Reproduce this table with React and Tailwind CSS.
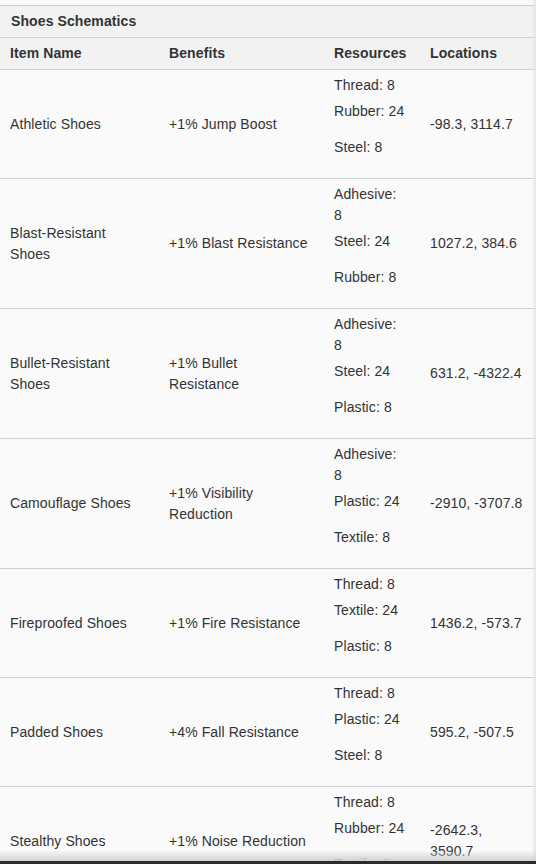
import React from 'react';

const rows = [
    {name: 'Athletic Shoes', benefit: '+1% Jump Boost', res: ['Thread: 8', 'Rubber: 24', 'Steel: 8'], loc: '-98.3, 3114.7'},
    {name: 'Blast-Resistant Shoes', benefit: '+1% Blast Resistance', res: ['Adhesive: 8', 'Steel: 24', 'Rubber: 8'], loc: '1027.2, 384.6'},
    {name: 'Bullet-Resistant Shoes', benefit: '+1% Bullet Resistance', res: ['Adhesive: 8', 'Steel: 24', 'Plastic: 8'], loc: '631.2, -4322.4'},
    {name: 'Camouflage Shoes', benefit: '+1% Visibility Reduction', res: ['Adhesive: 8', 'Plastic: 24', 'Textile: 8'], loc: '-2910, -3707.8'},
    {name: 'Fireproofed Shoes', benefit: '+1% Fire Resistance', res: ['Thread: 8', 'Textile: 24', 'Plastic: 8'], loc: '1436.2, -573.7'},
    {name: 'Padded Shoes', benefit: '+4% Fall Resistance', res: ['Thread: 8', 'Plastic: 24', 'Steel: 8'], loc: '595.2, -507.5'},
    {name: 'Stealthy Shoes', benefit: '+1% Noise Reduction', res: ['Thread: 8', 'Rubber: 24', 'Textile: 8'], loc: '-2642.3, 3590.7'},
];

const App = () => {
    return (
        <div className="min-h-screen bg-[#fafafa] pt-[5px] text-[14px] tracking-[0.1px] text-[#333] font-['Liberation_Sans',Arial,sans-serif]">
            <div className="border-t border-[#cfcfcf]">
                <div className="h-[31px] bg-[#f2f2f2] pl-[11px] font-bold leading-[31px] text-[#333]">
                    Shoes Schematics
                </div>
                <table className="w-full table-fixed border-collapse">
                    <colgroup>
                        <col className="w-[159px]"/>
                        <col className="w-[165px]"/>
                        <col className="w-[96px]"/>
                        <col/>
                    </colgroup>
                    <thead>
                    <tr className="h-[32px] border-y border-[#cfcfcf] bg-[#f2f2f2] text-left font-bold">
                        <th className="pl-[10px] pr-[14px] font-bold">Item Name</th>
                        <th className="pl-[10px] pr-[15px] font-bold">Benefits</th>
                        <th className="pl-[10px] pr-[13px] font-bold">Resources</th>
                        <th className="pl-[10px] pr-[11px] font-bold">Locations</th>
                    </tr>
                    </thead>
                    <tbody>
                    {rows.map((r) => (
                        <tr key={r.name} className="border-b border-[#cfcfcf] leading-[21px]">
                            <td className="pl-[10px] pr-[14px] align-middle">{r.name}</td>
                            <td className="pl-[10px] pr-[15px] align-middle">{r.benefit}</td>
                            <td className="pl-[10px] pr-[13px] pt-[5px] pb-[20px] align-top">
                                <div>{r.res[0]}</div>
                                <div className="mt-[5px]">{r.res[1]}</div>
                                <div className="mt-[15px]">{r.res[2]}</div>
                            </td>
                            <td className="pl-[10px] pr-[11px] align-middle">{r.loc}</td>
                        </tr>
                    ))}
                    </tbody>
                </table>
            </div>

            {/* edge shadows */}
            <div className="pointer-events-none fixed top-0 right-0 bottom-0 w-[4px] bg-gradient-to-r from-transparent to-[#e4e4e4]"/>
            <div className="pointer-events-none fixed bottom-0 left-0 right-0">
                <div className="h-[11px] bg-gradient-to-b from-transparent to-[#d2d2d2]"/>
                <div className="h-[3px] bg-[#2b2b2b]"/>
            </div>
        </div>
    )
};

export default App;
